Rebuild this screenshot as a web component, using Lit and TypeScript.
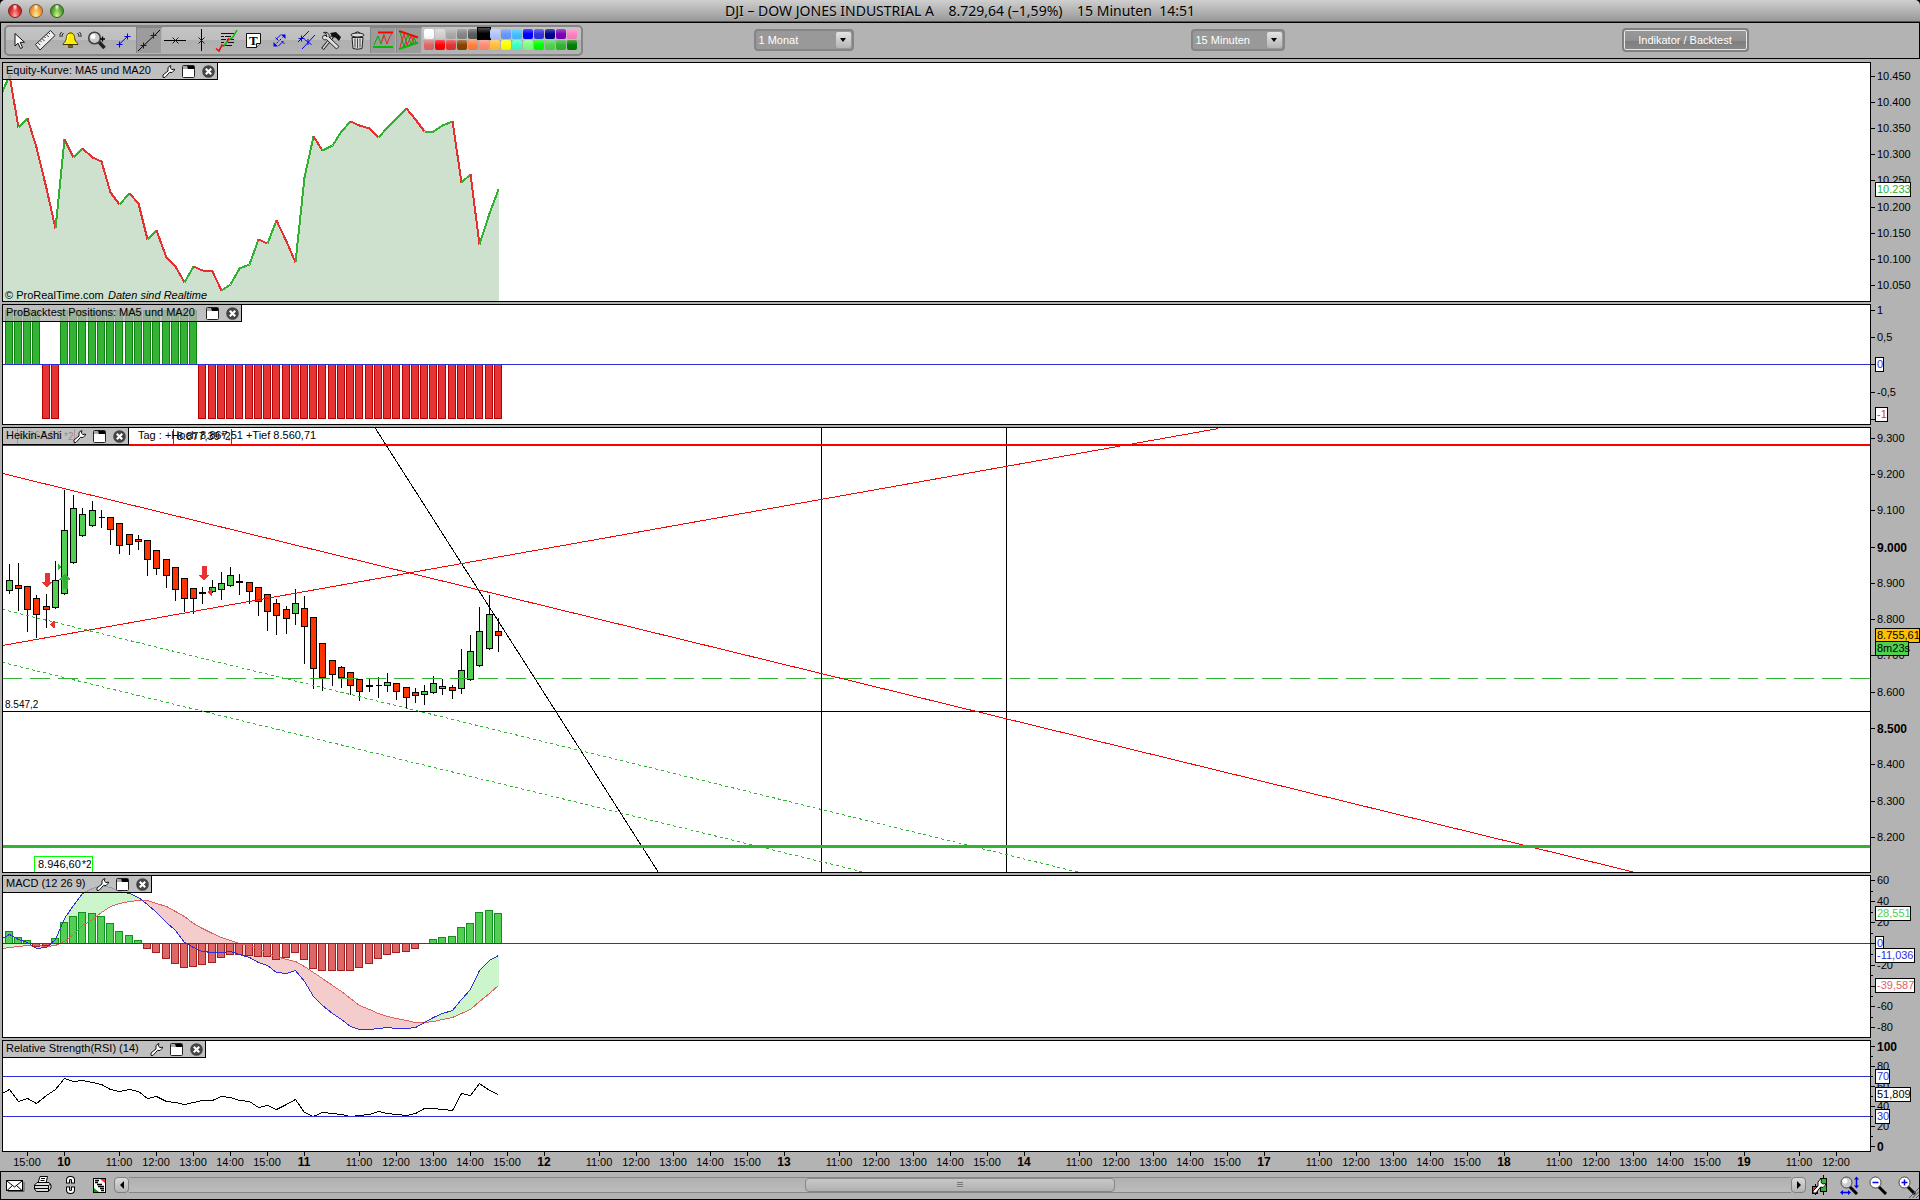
import { LitElement, html, svg, css, nothing, type TemplateResult } from "lit";
import { customElement, property, state } from "lit/decorators.js";
import { classMap } from "lit/directives/class-map.js";

/* ---------- geometry shared by all charts ---------- */

const PLOT_LEFT = 3;
const PLOT_WIDTH = 1867;
const barX = (i: number) => Math.floor(9.1 + (i * 240) / 26);

interface Tick { y: number; label?: string; bold?: boolean; minor?: boolean }
interface Tag { y: number; label: string; width: number; color?: string; fill?: string }
interface PanelSpec {
  name: string;
  wrench: boolean;
  top: number;
  height: number;
  ticks: Tick[];
  tags: Tag[];
  plot: TemplateResult;
  notes?: TemplateResult;
}

/* ---------- data ---------- */

const third = (base: number, values: number[]) => values.map((v) => base + Math.round(v / 3));

const equity = third(60, [
  45, 202, 173, 262, 385, 505, 238, 291, 264, 292, 304, 397, 433, 398, 429, 537, 511, 590, 619, 666,
  618, 629, 632, 690, 671, 625, 612, 537, 548, 480, 543, 606, 350, 227, 270, 254, 214, 182, 195, 204,
  231, 202, 175, 143, 178, 212, 212, 195, 184, 366, 343, 552, 458, 388,
]);

/* body top, body bottom, wick top, wick bottom, rising */
const candles: [number, number, number, number, number][] = [
  [480, 512, 430, 518, 1], [496, 506, 426, 570, 0], [499, 569, 499, 633, 0], [535, 584, 522, 651, 0],
  [559, 569, 519, 621, 0], [481, 563, 420, 563, 1], [331, 523, 206, 523, 1], [265, 428, 222, 428, 1],
  [283, 347, 262, 347, 1], [271, 317, 240, 317, 1], [292, 292, 266, 321, 1], [292, 329, 288, 372, 0],
  [310, 377, 310, 399, 0], [343, 374, 343, 402, 0], [358, 367, 342, 387, 0], [361, 419, 361, 465, 0],
  [391, 446, 391, 462, 0], [418, 467, 418, 501, 0], [442, 509, 442, 540, 0], [475, 536, 475, 573, 0],
  [505, 536, 505, 579, 0], [517, 520, 498, 549, 0], [502, 517, 477, 517, 1], [490, 509, 453, 537, 1],
  [466, 499, 438, 499, 1], [484, 490, 459, 522, 0], [487, 517, 487, 549, 0], [502, 545, 502, 585, 0],
  [523, 577, 523, 630, 0], [550, 587, 535, 642, 0], [568, 596, 555, 639, 0], [550, 581, 504, 612, 1],
  [565, 620, 525, 730, 0], [592, 746, 592, 804, 0], [670, 773, 670, 810, 0], [721, 764, 721, 795, 0],
  [742, 773, 735, 801, 0], [757, 797, 757, 822, 0], [778, 815, 778, 840, 0], [796, 799, 775, 813, 0],
  [796, 796, 768, 831, 0], [787, 797, 756, 813, 1], [790, 815, 790, 837, 0], [802, 833, 802, 861, 0],
  [817, 827, 801, 846, 0], [814, 824, 792, 852, 1], [790, 818, 765, 818, 1], [799, 806, 775, 822, 1],
  [802, 812, 792, 834, 0], [751, 806, 684, 819, 1], [694, 779, 642, 779, 1], [634, 737, 558, 737, 1],
  [583, 686, 522, 686, 1], [634, 647, 591, 693, 0],
];

const histogram = third(840, [
  274, 292, 301, 318, 314, 295, 247, 229, 217, 220, 229, 250, 274, 286, 301, 325, 337, 355, 370, 382,
  379, 373, 367, 352, 343, 343, 345, 349, 349, 358, 352, 337, 358, 385, 391, 391, 391, 391, 382, 370,
  355, 343, 337, 334, 325, 310, 298, 292, 289, 262, 250, 217, 211, 220,
]);
const macd = third(840, [
  283, 297, 306, 325, 321, 298, 235, 196, 160, 145, 136, 140, 152, 158, 170, 192, 216, 247, 271, 305,
  320, 332, 337, 335, 334, 341, 350, 367, 376, 396, 400, 391, 424, 467, 495, 520, 538, 557, 566, 568,
  565, 562, 563, 565, 560, 546, 532, 520, 511, 477, 446, 391, 359, 346,
]);
const signal = third(840, [
  320, 317, 315, 316, 318, 314, 303, 283, 255, 237, 215, 199, 189, 183, 179, 181, 189, 199, 212, 229,
  250, 264, 279, 291, 300, 308, 315, 325, 339, 349, 357, 364, 378, 397, 414, 434, 454, 475, 494, 508,
  519, 528, 535, 541, 545, 545, 542, 538, 532, 519, 506, 484, 460, 436,
]);
const rsi = third(1030, [
  176, 212, 205, 219, 195, 178, 145, 154, 151, 156, 161, 178, 184, 178, 184, 205, 199, 213, 217, 223,
  215, 211, 211, 198, 202, 210, 214, 230, 226, 238, 222, 206, 245, 259, 247, 250, 253, 259, 254, 253,
  244, 249, 252, 256, 248, 235, 235, 238, 241, 189, 196, 158, 179, 193,
]);

/* ---------- plots ---------- */

type Pt = [number, number];
const series = (startY: number, ys: number[]): Pt[] => [[2, startY], ...ys.map((y, i): Pt => [barX(i), y])];
const points = (pts: Pt[]) => pts.map((p) => p.join(",")).join(" ");
const hLine = (y: number, cls: string) => svg`<line class=${cls} x1="2" x2="1870" y1=${y} y2=${y} />`;

function equityPlot() {
  const pts = series(91, equity);
  return svg`
    <polygon class="area" points="${points(pts)} 498,302 2,302" />
    ${pts.slice(1).map((p, i) => {
      const q = pts[i];
      return svg`<line class=${p[1] > q[1] ? "down" : "up"} x1=${q[0]} y1=${q[1]} x2=${p[0]} y2=${p[1]} />`;
    })}`;
}

function positionsPlot() {
  return svg`
    ${equity.map((_, i) => {
      const long = i < 4 || (i > 5 && i < 21);
      return long
        ? svg`<rect class="bar-long" x=${barX(i) - 4} y="310" width="7" height="54" />`
        : svg`<rect class="bar-short" x=${barX(i) - 4} y="364" width="7" height="54" />`;
    })}
    ${hLine(364, "blue")}`;
}

function pricePlot() {
  const y = (v: number) => 420 + Math.round(v / 3);
  return svg`
    <path class="red" d="M17 428V443M74 428V443" />
    ${candles.map(([t, b, wt, wb, up], i) => {
      const x = barX(i);
      return svg`
        <line class="ink" x1=${x} x2=${x} y1=${y(wt)} y2=${y(wb) + 0.4} />
        ${b - t < 2
          ? svg`<line class="ink" x1=${x - 3} x2=${x + 3} y1=${y(t)} y2=${y(t)} />`
          : svg`<rect class=${up ? "candle-up" : "candle-down"} x=${x - 3} y=${y(t)} width="6" height=${Math.max(1, y(b) - y(t) - 1)} />`}`;
    })}
    ${hLine(678, "dash")}
    ${hLine(711, "ink")}
    <line class="ink" x1="821" x2="821" y1="427" y2="872" />
    <line class="ink" x1="1006" x2="1006" y1="427" y2="872" />
    <line class="ink" x1="375" y1="428" x2="658" y2="872" />
    <line class="red" x1="2" y1="473" x2="1635" y2="872" />
    <line class="red" x1="2" y1="645" x2="1218" y2="428" />
    <line class="dot" x1="2" y1="609" x2="1079" y2="872" />
    <line class="dot" x1="2" y1="662" x2="865" y2="872" />
    <rect class="thick-red" x="2" y="443.5" width="1870" height="2" />
    <rect class="thick-green" x="2" y="844.5" width="1870" height="3" />
    <path class="mark-down" d="M44 572h5v9h3l-5.500 6.500l-5.500 -6.500h3z" />
    <path class="mark-down" d="M201 565h5v9h3l-5.500 6.500l-5.500 -6.500h3z" />
    <path class="mark-up" d="M62 588h5v-9h3l-5.500 -6.500l-5.500 6.500h3z" />
    <path class="mark-up" d="M57 562.500l4.500 4l-4.500 4z" />
    <path class="mark-down" d="M54 620l-4.500 4l4.500 4z" />
    <path class="mark-down" d="M211 587.500l-4.500 4l4.500 4z" />
    <path class="red" d="M173 428V444M231 428V444" />
    <path class="lime" d="M34 872V856H92V872" />`;
}

function macdPlot() {
  const m = series(938, macd);
  const s = series(948, signal);
  const fills: TemplateResult[] = [];
  for (let i = 1; i < m.length; i++) {
    const [x0, m0] = m[i - 1];
    const [x1, m1] = m[i];
    const s0 = s[i - 1][1];
    const s1 = s[i][1];
    const d0 = s0 - m0;
    const d1 = s1 - m1;
    const kind = (d: number) => (d > 0 ? "gain" : "loss");
    if (d0 * d1 < 0) {
      const t = d0 / (d0 - d1);
      const cx = x0 + t * (x1 - x0);
      const cy = m0 + t * (m1 - m0);
      fills.push(svg`<polygon class=${kind(d0)} points="${x0},${m0} ${cx},${cy} ${x0},${s0}" />
        <polygon class=${kind(d1)} points="${cx},${cy} ${x1},${m1} ${x1},${s1}" />`);
    } else {
      fills.push(svg`<polygon class=${kind(d0 + d1)} points="${x0},${m0} ${x1},${m1} ${x1},${s1} ${x0},${s0}" />`);
    }
  }
  return svg`
    ${fills}
    ${histogram.map((v, i) => {
      if (v === 943) return nothing;
      const up = v < 943;
      return svg`<rect class=${up ? "hist-up" : "hist-down"} x=${barX(i) - 4} width="7"
        y=${Math.min(v, 943)} height=${Math.abs(v - 943)} />`;
    })}
    <polyline class="signal" points=${points(s)} />
    <polyline class="macd" points=${points(m)} />
    ${hLine(943, "blue")}`;
}

const rsiPlot = () => svg`
  <polyline class="ink" points=${points(series(1093, rsi))} />
  ${hLine(1076, "blue")}
  ${hLine(1116, "blue")}`;

const BLUE = "#2f2fd8";

const panels: PanelSpec[] = [
  {
    name: "Equity-Kurve: MA5 und MA20", wrench: true, top: 62, height: 240,
    ticks: [76, 102, 128, 154, 180, 207, 233, 259, 285].map((y, i) => ({ y, label: `10.${String(450 - i * 50).padStart(3, "0")}` })),
    tags: [{ y: 182, label: "10.233", width: 35, color: "#2fb12f" }],
    plot: equityPlot(),
    notes: svg`<text x="2" y="100%" dy="-2">© ProRealTime.com</text>
      <text class="slanted" x="105" y="100%" dy="-2">Daten sind Realtime</text>`,
  },
  {
    name: "ProBacktest Positions: MA5 und MA20", wrench: false, top: 304, height: 121,
    ticks: [
      { y: 310, label: "1" }, { y: 337, label: "0,5" }, { y: 364, label: "" },
      { y: 392, label: "-0,5" }, { y: 419, label: "" },
    ],
    tags: [
      { y: 357, label: "0", width: 8, color: BLUE },
      { y: 407, label: "-1", width: 12, color: "#e63030" },
    ],
    plot: positionsPlot(),
  },
  {
    name: "Heikin-Ashi", wrench: true, top: 427, height: 446,
    ticks: [438, 474, 510, 547, 583, 619, 655, 692, 728, 764, 801, 837].map((y, i) => {
      const v = 9300 - i * 100;
      return { y, label: `${Math.floor(v / 1000)}.${String(v % 1000).padStart(3, "0")}`, bold: v % 500 === 0 };
    }),
    tags: [
      { y: 628, label: "8.755,61", width: 44, fill: "#ffc000" },
      { y: 641, label: "8m23s", width: 33, fill: "#4fcf4f" },
    ],
    plot: pricePlot(),
    notes: svg`<text x="16" y="11">8.867,51</text><text class="small" x="61" y="12">*2</text>
      <text x="135" y="11">Tag : +Hoch 8.867,51 +Tief 8.560,71</text>
      <text x="174" y="12">8.877,39</text><text class="small" x="218" y="12">*2</text>
      <text class="small" x="2" y="63.100%">8.547,2</text>
      <text x="35" y="100%" dy="-4">8.946,60</text><text class="small" x="79" y="100%" dy="-4">*2</text>`,
  },
  {
    name: "MACD (12 26 9)", wrench: true, top: 875, height: 163,
    ticks: [
      ...[60, 40, 20, 0, -20, -40, -60, -80].map((v, i) => ({
        y: [880, 901, 922, 943, 965, 986, 1006, 1027][i], label: v ? String(v) : "",
      })),
      ...[891, 912, 933, 954, 975, 996, 1017].map((y) => ({ y, minor: true })),
    ],
    tags: [
      { y: 906, label: "28,551", width: 35, color: "#4fcf4f" },
      { y: 936, label: "0", width: 8, color: BLUE },
      { y: 948, label: "-11,036", width: 39, color: BLUE },
      { y: 978, label: "-39,587", width: 39, color: "#de6060" },
    ],
    plot: macdPlot(),
  },
  {
    name: "Relative Strength(RSI) (14)", wrench: true, top: 1040, height: 112,
    ticks: [
      ...[100, 80, 60, 40, 20, 0].map((v, i) => ({ y: 1046 + i * 20, label: String(v), bold: v % 100 === 0 })),
      ...[1056, 1076, 1096, 1116, 1136].map((y) => ({ y, minor: true })),
    ],
    tags: [
      { y: 1069, label: "70", width: 14, color: BLUE },
      { y: 1087, label: "51,809", width: 35 },
      { y: 1109, label: "30", width: 14, color: BLUE },
    ],
    plot: rsiPlot(),
  },
];

/* ---------- icons ---------- */

const wrenchIcon = html`<svg width="13" height="13" viewBox="0 0 13 13" aria-hidden="true">
  <path d="M1 10L6 6L6 2.500L8.500 .5L9 .7L8.300 3L10 4.600L12.400 4L12.500 5L10 7.600L7.600 7.300L3 12.400H1Z" fill="#fff" stroke="#111" /></svg>`;
const windowIcon = html`<svg width="13" height="13" viewBox="0 0 13 13" aria-hidden="true">
  <rect x=".5" y=".5" width="12" height="12" rx="1" fill="#fff" stroke="#222" /><path d="M1 4V1H5L7 4Z" fill="#aaa" /><path d="M5 1H12V4H6Z" fill="#000" /></svg>`;
const closeIcon = html`<svg width="13" height="13" viewBox="0 0 13 13" aria-hidden="true">
  <circle cx="6.500" cy="6.500" r="6.300" fill="#444" /><path d="M3.800 3.800L9.200 9.200M9.200 3.800L3.800 9.200" stroke="#fff" stroke-width="2.200" /></svg>`;

const cross = (x: number, y: number) => svg`<path d="M${x - 3} ${y}h6M${x} ${y - 3}v6" stroke="#00f" />`;
const saltire = (x: number, y: number) => svg`<path d="M${x - 3} ${y - 3}l6 6M${x - 3} ${y + 3}l6 -6" stroke="#00f" />`;

const tools: { name: string; art: TemplateResult; on?: boolean }[] = [
  { name: "Auswahl", art: svg`<path d="M9 6.500V19L12 16.200L14.500 21.500L16.500 20.500L14.200 15.300H18.500Z" fill="#fff" stroke="#111" />` },
  { name: "Lineal", art: svg`<path d="M3.500 17.500L18.500 3.500L23 8.500L8 23Z" fill="#eee" stroke="#222" />
      <path d="M5.700 15.500l2.500 2.500M8 13.500l1.500 1.500M10 11.500l2.500 2.500M12.200 9.500l1.500 1.500M14.300 7.500l2.500 2.500M16.400 5.500l1.500 1.500" stroke="#333" />` },
  { name: "Alarm", art: svg`<path d="M12.500 6c-4 0-4 4-4.500 7c-.3 1.500-3 3-3 4.500h15c0-1.500-2.700-3-3-4.500c-.5-3-.5-7-4.500-7z" fill="#fe0" stroke="#443800" />
      <path d="M10.500 8c-1 2-1 4-1.500 6" stroke="#fff" fill="none" /><rect x="11" y="5" width="3" height="2" fill="#a80" /><path d="M10.500 18.500h4v2h-4z" fill="#960" stroke="#222" stroke-width=".6" />
      <path d="M5.500 6q-2 2-1.500 4M3.500 5q-2 2-1.500 5M19.500 6q2 2 1.500 4M21.500 5q2 2 1.500 5" stroke="#222" fill="none" />` },
  { name: "Lupe", art: svg`<path d="M15 15l5.500 6" stroke="#222" stroke-width="3.500" /><circle cx="10.500" cy="11" r="5.800" fill="#ccc" stroke="#444" stroke-width="1.600" /><circle cx="9" cy="9.500" r="2.500" fill="#fff" />
      <path d="M18.500 9.500v5M16 12h5" stroke="#000" stroke-width="1.300" />` },
  { name: "Segment", art: svg`<path d="M9 17.500L18 9" stroke="#00f" />${cross(9.5, 17.5)}${cross(17.5, 9.5)}` },
  { name: "Linie", on: true, art: svg`<path d="M2 24L24 3" stroke="#000" />${cross(7.5, 18.5)}${cross(17.5, 8.5)}` },
  { name: "Horizontale Linie", art: svg`<path d="M2 13.500H24" stroke="#000" />${saltire(13.5, 13.5)}` },
  { name: "Vertikale Linie", art: svg`<path d="M13.500 2V24" stroke="#000" />${saltire(13.5, 13.5)}` },
  { name: "Notiz zur Kurve", art: svg`<path d="M7 6.500h13M7 9.500h3M11 9.500h6M7 12.500h5M13 12.500h7M7 15.500h3M14 15.500h6M8 18.500h10" stroke="#111" />
      <path d="M2 21.500L5 24L8 18L10 19" stroke="#e00" stroke-width="1.500" fill="none" /><path d="M10 19L13 15" stroke="#0b0" stroke-width="1.500" /><path d="M13 15L15 11" stroke="#e00" stroke-width="1.500" /><path d="M15 13L19 10L23 3" stroke="#0b0" stroke-width="1.500" fill="none" />` },
  { name: "Text", art: svg`<path d="M6.500 6.500h14v10l-4 4h-10z" fill="#fff" stroke="#111" /><path d="M20.500 16.500h-4v4" fill="#ccc" stroke="#111" /><text x="9" y="18" class="glyph">T</text>` },
  { name: "Verschieben", art: svg`<path d="M8 19L19 8" stroke="#00f" stroke-dasharray="2 2" /><path d="M15 7.500h4.500v4.500zM7.500 15v4.500h4.500z" fill="#00f" />
      <path d="M10 12.500l5 -5M12.500 19l5 -5M9.500 10.500l3 3M15.500 14l3 3" stroke="#00f" />` },
  { name: "Parallele", art: svg`<path d="M6 15L17 4M10 22L23 8" stroke="#00f" />${cross(9.5, 11.5)}<path d="M12.500 12.500l7 5M16 12v6" stroke="#00f" />` },
  { name: "Werkzeuge", art: svg`<path d="M4.500 22L15 9" stroke="#222" stroke-width="3.500" /><path d="M5 21.500L14 10" stroke="#ddd" stroke-width="1.500" />
      <path d="M12 6L18 5L23 10L21 14L18 11L14 9Z" fill="#111" /><path d="M4.500 9.500L7 8L9 10L8 6.500L5.500 5.500C9 4.500 12 7 11 10L21 19.500L18.500 22L8.500 12.500C6 13.500 4 12 4.500 9.500Z" fill="#ddd" stroke="#222" />` },
  { name: "Löschen", art: svg`<ellipse cx="13.500" cy="8" rx="6.500" ry="2" fill="#ddd" stroke="#222" /><path d="M11 6q2.500-2.500 5 0" fill="none" stroke="#222" />
      <path d="M8 10.500h11l-1 11q-4.500 1.500-9 0z" fill="#ddd" stroke="#222" /><path d="M11 11.500v9M13.500 11.500v10M16 11.500v9" stroke="#444" />` },
  { name: "Horizontale Zonen", on: true, art: svg`<path d="M8 5.500H23" stroke="#f00" stroke-width="2" /><path d="M3 20H23" stroke="#0b0" stroke-width="2" />
      <path d="M4 18L8 9L11 17L14 7" stroke="#0a0" fill="none" /><path d="M12 14L14 8L17 17L20 9L22 7" stroke="#e22" fill="none" />` },
  { name: "Dreiecke", on: true, art: svg`<path d="M3 4L22 10.500" stroke="#f00" stroke-width="2" /><path d="M3 22L22 15.500" stroke="#0b0" stroke-width="2" />
      <path d="M4 5L8 20L12 7L15 18L18 10L20 16" stroke="#0a0" fill="none" /><path d="M4 20L8 7L11 18L15 9L18 16" stroke="#e22" fill="none" />` },
];

const palette = [
  "#ffffff", "#d2d2d2", "#aaaaaa", "#868686", "#5c5c5c", "#000000", "#b2c6ff", "#6699ff", "#44c0ff", "#0000ff", "#3333dd", "#00008f", "#8000b8", "#ff80c0",
  "#e06666", "#ff0000", "#e63333", "#884400", "#ff8040", "#ff8c78", "#ffbf40", "#ffff00", "#40ffc0", "#80ff80", "#00ff00", "#52d052", "#33b333", "#008000",
];

const mailIcon = html`<svg width="20" height="20" viewBox="0 0 20 20" aria-hidden="true"><path d="M3 16.500H19V7" fill="none" stroke="#555" />
  <rect x="1.500" y="5.500" width="16" height="10" fill="#fff" stroke="#000" /><path d="M2 6L9.500 12L17 6M2 15.500L7.500 10.500M17 15.500L11.500 10.500" fill="none" stroke="#000" /></svg>`;
const printIcon = html`<svg width="20" height="20" viewBox="0 0 20 20" aria-hidden="true"><path d="M5 8L7 1.500H14.500L13 8Z" fill="#fff" stroke="#000" /><path d="M8 3.500h4M7.500 5.500h4" stroke="#000" />
  <path d="M1.500 10L4 7.500H16L18 10V13L15.500 16.500H3.500L1.500 14Z" fill="#ddd" stroke="#000" /><path d="M2 10.500H15.500V16M2 13.500H15M18 9L15.500 10.500" stroke="#000" fill="none" /></svg>`;
const linkIcon = html`<svg width="20" height="20" viewBox="0 0 20 20" aria-hidden="true"><g fill="none" stroke="#000" stroke-width="4"><path d="M7 8.500V5Q7 3 9.500 3Q12 3 12 5V8.500M7 11.500V15Q7 17 9.500 17Q12 17 12 15V11.500" /></g>
  <g fill="none" stroke="#fff" stroke-width="2"><path d="M7 7.500V5Q7 3 9.500 3Q12 3 12 5V7.500M7 12.500V15Q7 17 9.500 17Q12 17 12 15V12.500" /></g></svg>`;
const reportIcon = html`<svg width="20" height="20" viewBox="0 0 20 20" aria-hidden="true"><rect x="4.500" y="3.500" width="12" height="14" fill="#fff" stroke="#000" />
  <path d="M6 5.500h4M6 7.500h3M8 9.500h5M9 11.500h6M11 13.500h4M12 15.500h3" stroke="#000" stroke-width="1.400" /><path d="M11 4H16V8Z" fill="#e33" /><path d="M5 17V13L10 17Z" fill="#0a0" /></svg>`;
const candleIcon = html`<svg width="20" height="22" viewBox="0 0 20 22" aria-hidden="true"><path d="M5.500 10V21M13.500 1V21" stroke="#000" /><rect x="2.500" y="12.500" width="5" height="7" fill="#e63030" stroke="#000" /><rect x="10.500" y="4.500" width="6" height="13" fill="#33b333" stroke="#000" />
  <path d="M3 17L8 12V8L10.500 5L11.500 5.500L11 8.500L13 10L15.500 9.500V11L13 13.500L10.500 13L6 19H3Z" fill="#fff" stroke="#111" /></svg>`;
const zoomIcon = (art: unknown, sphere = false) => html`<svg width="20" height="20" viewBox="0 0 20 20" aria-hidden="true">
  <path d="M10 11L18 19" stroke="#000" stroke-width="3" /><circle cx="7.500" cy="7.500" r="5.500" fill=${sphere ? "#ccc" : "#fff"} stroke="#444" />${art}</svg>`;

/* ---------- elements ---------- */

@customElement("chart-panel")
class ChartPanel extends LitElement {
  @property({ attribute: false }) spec!: PanelSpec;

  static styles = css`
    :host { display: grid; grid-template-columns: minmax(0, 1fr) 49px; min-height: 0; font: 11px/14px "Liberation Sans", Arial, sans-serif; color: #000; }
    .frame { display: grid; grid-template: minmax(0, 1fr) / minmax(0, 1fr); border: 1px solid #000; background: #fff; min-height: 0; overflow: hidden; }
    .plot, header { grid-area: 1 / 1; }
    .plot, .axis { display: block; width: 100%; height: 100%; min-height: 0; }
    .axis { overflow: visible; }
    .shapes { shape-rendering: crispEdges; fill: none; }
    header { justify-self: start; align-self: start; display: flex; align-items: center; height: 16px; padding: 0 2px 0 3px; gap: 7px; background: rgba(176, 176, 176, 0.8); border: solid #000; border-width: 0 1px 1px 0; }
    h2 { margin: 0 4px 0 0; font: inherit; line-height: 14px; padding-bottom: 2px; white-space: nowrap; }
    button { display: block; padding: 0; border: 0; background: none; width: 13px; height: 13px; }
    button svg { display: block; }
    text { font: 11px "Liberation Sans", Arial, sans-serif; fill: #000; }
    text.small { font-size: 10px; }
    text.slanted { font-style: italic; }
    text.strong { font-size: 12px; font-weight: bold; }
    .area { fill: #cee1ce; }
    .up { stroke: #2fb12f; stroke-width: 2; }
    .down { stroke: #e63030; stroke-width: 2; }
    .blue { stroke: #2f2fd8; }
    .ink { stroke: #000; }
    .red { stroke: #f00; }
    .lime { stroke: #0f0; }
    .bar-long { fill: #33b333; stroke: #0f800f; }
    .bar-short { fill: #e63333; stroke: #b00000; }
    .candle-up { fill: #52cf52; stroke: #000; }
    .candle-down { fill: #ff3300; stroke: #000; }
    .dash { stroke: #33b333; stroke-dasharray: 20 8; stroke-dashoffset: 1; }
    .dot { stroke: #33b333; stroke-dasharray: 3 3; }
    .thick-red { fill: #f00; }
    .thick-green, .mark-up { fill: #33b333; }
    .mark-down { fill: #e63333; }
    .gain { fill: #ccf5cc; }
    .loss { fill: #f5cccc; }
    .hist-up { fill: #52cf52; stroke: #0f8f1f; }
    .hist-down { fill: #de6666; stroke: #9f2020; }
    .signal { stroke: #de6060; }
    .macd { stroke: #2f2fd8; }
  `;

  render() {
    const { name, wrench, top, height, ticks, tags, plot, notes } = this.spec;
    const pct = (y: number) => `${((y - top) / height) * 100}%`;
    return html`
      <section class="frame">
        <svg class="plot" role="img" aria-label=${name}>
          <svg class="shapes" viewBox="${PLOT_LEFT - 0.5} ${top + 0.5} ${PLOT_WIDTH} ${height - 2}" preserveAspectRatio="none">${plot}</svg>
          ${notes ?? nothing}
        </svg>
        <header>
          <h2>${name}</h2>
          ${wrench ? html`<button aria-label="Einstellungen">${wrenchIcon}</button>` : nothing}
          <button aria-label="Fenster">${windowIcon}</button>
          <button aria-label="Schließen">${closeIcon}</button>
        </header>
      </section>
      <svg class="axis">
        ${ticks.map((t) => svg`
          <rect x="0" y=${pct(t.y)} width=${t.minor ? 2 : 4} height="1" />
          ${t.label ? svg`<text class=${t.bold ? "strong" : ""} x="6" y=${pct(t.y)} dy=${t.bold ? 5 : 4}>${t.label}</text>` : nothing}`)}
        ${tags.map((t) => svg`
          <rect x="4" y=${pct(t.y)} width=${t.width + 1} height="15" />
          <rect x="5" y=${pct(t.y + 1)} width=${t.width - 1} height="13" fill=${t.fill ?? "#fff"} />
          <text x="6" y=${pct(t.y)} dy="11" style="fill:${t.color ?? "#000"}">${t.label}</text>`)}
      </svg>`;
  }
}

@customElement("time-axis")
class TimeAxis extends LitElement {
  static styles = css`
    :host { display: block; height: 19px; }
    svg { display: block; width: 100%; height: 100%; }
    text { font: 11px "Liberation Sans", Arial, sans-serif; text-anchor: middle; }
    text.strong { font-size: 12px; font-weight: bold; }
  `;

  render() {
    const marks: { x: number; label: string; bold?: boolean }[] = [{ x: 27, label: "15:00" }];
    [10, 11, 12, 13, 14, 17, 18, 19].forEach((day, d) => {
      const x = 64 + d * 240;
      marks.push({ x, label: String(day), bold: true });
      [11, 12, 13, 14, 15].forEach((h, i) => {
        const hx = Math.round(x + ((6 + i * 4) * 240) / 26);
        if (hx < 1850) marks.push({ x: hx, label: `${h}:00` });
      });
    });
    const pct = (x: number) => `${(x / 1920) * 100}%`;
    return html`<svg role="img" aria-label="Zeitachse">
      ${marks.map((m) => svg`<rect x=${pct(m.x)} y="0" width="1" height="4" />
        <text class=${m.bold ? "strong" : ""} x=${pct(m.x)} y="14">${m.label}</text>`)}
    </svg>`;
  }
}

@customElement("tool-bar")
class ToolBar extends LitElement {
  @state() private color = "#000000";

  static styles = css`
    :host { display: flex; align-items: center; height: 35px; padding-left: 3px; background: #b3b3b3; border: 1px solid #000; font: 11px/14px "Liberation Sans", Arial, sans-serif; }
    .group { display: flex; align-items: flex-start; height: 27px; padding-right: 4px; border: 2px solid #858585; border-radius: 5px; background: linear-gradient(#c4c4c4, #bebebe 50%, #b0b0b0 50%, #b4b4b4); }
    .tool { display: block; width: 26px; height: 26px; padding: 0; border: 0; background: none; }
    .tool.on { background: #9c9c9c; box-shadow: inset 1px 1px #858585, inset -1px 0 #b3b3b3; }
    .tool svg { display: block; }
    .glyph { font: bold 13px "Liberation Serif", serif; }
    .palette { display: grid; grid-template-columns: repeat(14, 10px); grid-auto-rows: 10px; gap: 1px; padding: 2px 0 0 2px; }
    .swatch { padding: 0; border: 0; border-radius: 2px; background-image: linear-gradient(rgba(255, 255, 255, 0.3), rgba(255, 255, 255, 0) 50%, rgba(0, 0, 0, 0.06)); }
    .swatch.picked { margin: -2px -2px -1px; border-radius: 0; border: 1px solid #000; }
    .fields { flex: 1; display: flex; justify-content: space-around; align-items: center; padding: 0 2px 1px; }
    .field { display: grid; align-items: center; height: 22px; box-sizing: border-box; border: 2px solid #858585; border-radius: 4px; background: #999; }
    select { grid-area: 1 / 1; appearance: none; height: 18px; border: 0; padding: 0 24px 0 3px; background: none; color: #fff; font: inherit; width: 96px; }
    .short select { width: 90px; }
    .drop { grid-area: 1 / 1; justify-self: end; margin-right: 1px; pointer-events: none; }
    .action { width: 127px; height: 24px; padding: 0; border: 2px solid #808080; box-shadow: inset 0 0 0 1px #e8e8e8; border-radius: 4px; background: linear-gradient(#999, #8f8f8f 55%, #7d7d7d 55%, #8a8a8a); color: #fff; font: inherit; }
  `;

  private field(id: string, label: string, value: string, cls: string) {
    return html`<div class="field ${cls}">
      <select id=${id} aria-label=${label}><option>${value}</option></select>
      <svg class="drop" width="15" height="16" viewBox="0 0 15 16" aria-hidden="true">
        <defs><linearGradient id="g" x2="0" y2="1"><stop stop-color="#e4e4e4" /><stop offset="1" stop-color="#b4b4b4" /></linearGradient></defs>
        <rect width="15" height="16" rx="2" fill="url(#g)" /><path d="M4 6H10L7 10Z" />
      </svg>
    </div>`;
  }

  render() {
    return html`
      <div class="group">
        ${tools.map((t) => html`<button class=${classMap({ tool: true, on: !!t.on })} aria-label=${t.name}>
          <svg width="26" height="26" viewBox="0 0 26 26" aria-hidden="true">${t.art}</svg></button>`)}
        <div class="palette">
          ${palette.map((c) => html`<button class=${classMap({ swatch: true, picked: c === this.color })} aria-label="Farbe ${c}"
            style="background-color:${c}" @click=${() => (this.color = c)}></button>`)}
        </div>
      </div>
      <div class="fields">
        ${this.field("range", "Zeitraum", "1 Monat", "")}
        ${this.field("unit", "Zeiteinheit", "15 Minuten", "short")}
        <button class="action">Indikator / Backtest</button>
      </div>`;
  }
}

@customElement("status-bar")
class StatusBar extends LitElement {
  static styles = css`
    :host { display: flex; align-items: center; height: 26px; padding: 0 0 1px 4px; background: #b3b3b3; border: 1px solid #000; }
    button { padding: 0; border: 0; background: none; display: block; }
    svg { display: block; }
    .left, .right { display: flex; align-items: center; }
    .left { gap: 8px; padding-right: 5px; }
    .right { gap: 9px; padding: 0 2px 0 4px; }
    .step { display: grid; place-items: center; width: 15px; height: 16px; box-sizing: border-box; border: 1px solid #808080; border-radius: 4px; background: linear-gradient(#dadada, #b4b4b4); }
    input { flex: 1; min-width: 0; appearance: none; height: 16px; margin: 0; box-sizing: border-box; border: solid #868686; border-width: 1px 0; background: linear-gradient(#b0b0b0, #bcbcbc); }
    input::-webkit-slider-thumb { appearance: none; box-sizing: border-box; width: 310px; height: 14px; border: 1px solid #868686; border-radius: 4px; background: repeating-linear-gradient(#777 0 1px, #bbb 1px 2px) center / 6px 6px no-repeat, linear-gradient(#c8c8c8, #b0b0b0); }
    .grip { align-self: end; margin-left: -10px; }
  `;

  render() {
    return html`
      <div class="left">
        <button aria-label="Mail">${mailIcon}</button>
        <button aria-label="Drucken">${printIcon}</button>
        <button aria-label="Verknüpfen">${linkIcon}</button>
        <button aria-label="Orderbuch">${reportIcon}</button>
      </div>
      <button class="step" aria-label="Zurück"><svg width="6" height="8" viewBox="0 0 6 8"><path d="M5 0V8L1 4Z" /></svg></button>
      <input type="range" min="0" max="100" value="50" aria-label="Zeitbereich" />
      <button class="step" aria-label="Vor"><svg width="6" height="8" viewBox="0 0 6 8"><path d="M1 0V8L5 4Z" /></svg></button>
      <div class="right">
        <button aria-label="Darstellung">${candleIcon}</button>
        <button aria-label="Zoom anpassen">${zoomIcon(svg`<circle cx="6" cy="6" r="2.500" fill="#fff" /><path d="M17.500 3V12M3 17.500H10" stroke="#00f" stroke-width="1.500" /><path d="M15 4.500L17.500 1.500L20 4.500ZM15 10.500L17.500 13.500L20 10.500ZM4 15L1 17.500L4 20ZM9 15L12 17.500L9 20Z" fill="#00f" />`, true)}</button>
        <button aria-label="Verkleinern">${zoomIcon(svg`<path d="M4.500 7.500h6" stroke="#00f" stroke-width="1.500" />`)}</button>
        <button aria-label="Vergrößern">${zoomIcon(svg`<path d="M4.500 7.500h6M7.500 4.500v6" stroke="#00f" stroke-width="1.500" />`)}</button>
      </div>
      <svg class="grip" width="10" height="10" viewBox="0 0 10 10" aria-hidden="true"><path d="M0 10L10 0M3.500 10L10 3.500M7 10L10 7" stroke="#555" /></svg>`;
  }
}

@customElement("app-root")
class AppRoot extends LitElement {
  static styles = css`
    :host { display: grid; grid-template-rows: 22px auto minmax(0, 1fr) auto auto; height: 100vh; min-height: 720px; background: #b3b3b3; }
    .title { display: grid; grid-template-columns: 1fr auto 1fr; align-items: center; border-radius: 5px 5px 0 0; background: linear-gradient(#cfcfcf, #969696); box-shadow: inset 0 -1px #555; }
    .corner { background: #000; }
    .lights { display: flex; gap: 7px; padding-left: 8px; }
    .light { width: 14px; height: 14px; padding: 0; border: 1px solid; border-radius: 50%; box-sizing: border-box; }
    .close { border-color: #7c2020; background: radial-gradient(ellipse at 50% 15%, #fff 0, #fff0 30%), radial-gradient(at 50% 90%, #ffb0b0, #e03030 55%, #a81818); }
    .min { border-color: #8a5a20; background: radial-gradient(ellipse at 50% 15%, #fff 0, #fff0 30%), radial-gradient(at 50% 90%, #fff09a, #f0a040 55%, #b87020); }
    .max { border-color: #2f6020; background: radial-gradient(ellipse at 50% 15%, #fff 0, #fff0 30%), radial-gradient(at 50% 90%, #d0ff90, #60a838 55%, #3c7820); }
    h1 { margin: 0; font: 14px/22px "Noto Sans", "Open Sans", sans-serif; color: #000; white-space: pre; text-shadow: 0 1px rgba(255, 255, 255, 0.35); }
    main { display: grid; grid-template-rows: 240fr 121fr 446fr 163fr 112fr; gap: 2px; padding: 3px 0 0 2px; min-height: 0; }
  `;

  render() {
    return html`
      <div class="corner"><header class="title">
        <div class="lights">
          <button class="light close" aria-label="Schließen"></button>
          <button class="light min" aria-label="Minimieren"></button>
          <button class="light max" aria-label="Zoomen"></button>
        </div>
        <h1>DJI – DOW JONES INDUSTRIAL A    8.729,64 (–1,59%)    15 Minuten  14:51</h1>
      </header></div>
      <tool-bar></tool-bar>
      <main>${panels.map((p) => html`<chart-panel .spec=${p}></chart-panel>`)}</main>
      <time-axis></time-axis>
      <status-bar></status-bar>`;
  }
}
